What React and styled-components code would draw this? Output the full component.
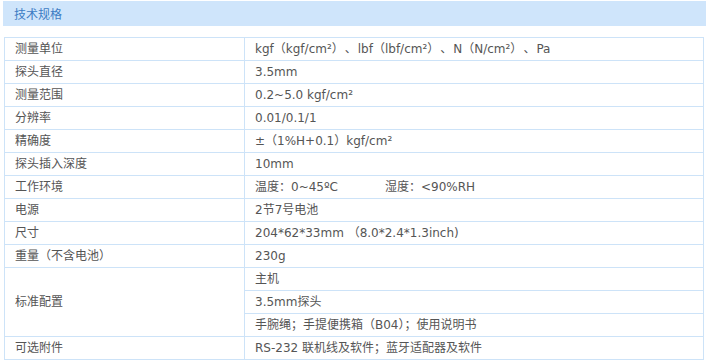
import React from "react";
import styled, { createGlobalStyle } from "styled-components";

const Global = createGlobalStyle`
  html, body { margin: 0; padding: 0; background: #fff; }
  body { font-family: "DejaVu Sans", "Noto Sans CJK SC", sans-serif; }
`;

const Page = styled.div`
  width: 706px;
  height: 364px;
  padding: 1px 0 0 3px;
  box-sizing: border-box;
  display: flex;
  flex-direction: column;
  gap: 11px;
`;

const Header = styled.div`
  height: 25px;
  background: #cfe5fb;
  display: flex;
  align-items: center;
  padding-left: 11px;
  color: #3d7cc4;
  font-size: 12px;
  font-family: "Noto Sans CJK SC", sans-serif;
`;

const Table = styled.table`
  margin-left: 1px;
  width: 700px;
  border-collapse: collapse;
  table-layout: fixed;
  font-size: 12px;
  color: #555;
`;

const Cell = styled.td`
  border: 1px solid #cde3f8;
  height: 22px;
  padding: 0 0 0 10px;
  line-height: 22px;
  white-space: pre;
  box-sizing: border-box;
  width: ${(p) => (p.$label ? "240px" : "auto")};
`;

const Gap = styled.span`
  display: inline-block;
  width: ${(p) => p.$w}px;
`;

const Sep = styled.span`
  display: inline-block;
  margin: 0 1px;
`;

const rows = [
  ["测量单位", "units"],
  ["探头直径", "3.5mm"],
  ["测量范围", "0.2~5.0 kgf/cm²"],
  ["分辨率", "0.01/0.1/1"],
  ["精确度", "±（1%H+0.1）kgf/cm²"],
  ["探头插入深度", "10mm"],
  ["工作环境", "env"],
  ["电源", "2节7号电池"],
  ["尺寸", "204*62*33mm （8.0*2.4*1.3inch)"],
  ["重量（不含电池）", "230g"],
];

function renderValue(v) {
  if (v === "env") {
    return (
      <>
        温度：0~45ºC<Gap $w={47} />湿度：&lt;90%RH
      </>
    );
  }
  if (v === "units") {
    return (
      <>
        kgf（kgf/cm²）<Sep>、</Sep>lbf（lbf/cm²）<Sep>、</Sep>N（N/cm²）<Sep>、</Sep>Pa
      </>
    );
  }
  return v;
}

export default function App() {
  return (
    <>
      <Global />
      <Page>
        <Header>技术规格</Header>
        <Table>
          <tbody>
            {rows.map(([k, v]) => (
              <tr key={k}>
                <Cell $label>{k}</Cell>
                <Cell>{renderValue(v)}</Cell>
              </tr>
            ))}
            <tr>
              <Cell $label rowSpan={3}>标准配置</Cell>
              <Cell>主机</Cell>
            </tr>
            <tr>
              <Cell>3.5mm探头</Cell>
            </tr>
            <tr>
              <Cell>手腕绳；手提便携箱（B04）；使用说明书</Cell>
            </tr>
            <tr>
              <Cell $label>可选附件</Cell>
              <Cell>RS-232 联机线及软件；蓝牙适配器及软件</Cell>
            </tr>
          </tbody>
        </Table>
      </Page>
    </>
  );
}
